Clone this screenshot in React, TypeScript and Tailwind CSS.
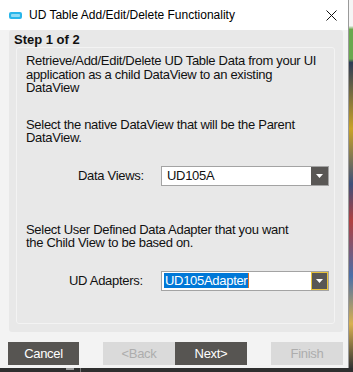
import React from "react";

const Arrow = () => (
  <svg width="7" height="4" viewBox="0 0 7 4">
    <path d="M0 0 H7 L3.5 4 Z" fill="#ffffff" />
  </svg>
);

type ComboProps = { value: string; focused?: boolean };

const Combo = ({ value, focused }: ComboProps) => (
  <div className="flex h-[20px] w-[168px] border border-[#a3a3a3] bg-white">
    <div className="flex flex-1 items-center pl-[2px]">
      {focused ? (
        <span className="flex items-center">
          <span className="bg-[#0078d7] px-[1px] leading-[15px] text-white">{value}</span>
          <span className="h-[15px] w-[1px] bg-[#e07020]" />
        </span>
      ) : (
        <span className="pl-[3px] text-[#111]">{value}</span>
      )}
    </div>
    <div
      className={
        focused
          ? "flex w-[17px] items-center justify-center border border-[#e8c23a] bg-[#595755]"
          : "flex w-[17px] items-center justify-center bg-[#595755]"
      }
    >
      <Arrow />
    </div>
  </div>
);

const WizButton = ({ label, enabled }: { label: string; enabled: boolean }) => (
  <div
    className={
      enabled
        ? "flex h-[23px] w-[72px] items-center justify-center bg-[#575552] text-white"
        : "flex h-[23px] w-[72px] items-center justify-center bg-[#dadada] text-[#adadad]"
    }
  >
    {label}
  </div>
);

export default function App() {
  return (
    <div className="flex h-[372px] w-[353px] flex-col bg-[#2f2f2f] font-['Liberation_Sans',Arial,sans-serif] text-[13px] tracking-[-0.3px]">
      <div className="flex h-[368px]">
        {/* window */}
        <div className="flex w-[349px] flex-col border-r border-[#9a9a9a] bg-[#f3f3f3]">
          {/* title bar */}
          <div className="flex h-[30px] items-center bg-white pl-[9px] pr-[11px]">
            <div className="flex h-[7px] w-[13px] items-center justify-center rounded-[2px] bg-[#29b6ea]">
              <div className="h-[3px] w-[9px] rounded-[1px] bg-[#8fdcf6]" />
            </div>
            <span className="ml-[7px] font-['Liberation_Sans',Arial,sans-serif] text-[12px] tracking-normal text-black">
              UD Table Add/Edit/Delete Functionality
            </span>
            <svg className="ml-auto" width="11" height="11" viewBox="0 0 11 11">
              <path d="M0.5 0.5 L10.5 10.5 M10.5 0.5 L0.5 10.5" stroke="#111" strokeWidth="1" />
            </svg>
          </div>

          {/* body */}
          <div className="flex flex-1 flex-col pl-[9px] pr-[5px]">
            <div className="flex h-[302px] flex-col rounded-[3px] bg-[#e8e8e8] pl-[7px] pr-[8px]">
              <div className="-ml-[2px] pt-[2px] font-bold leading-[15px] tracking-normal text-[#111]">Step 1 of 2</div>
              <div className="flex h-[277px] flex-col rounded-[3px] border border-[#f3f3f3] bg-[#e8e8e8] pl-[9px] leading-[13.5px] whitespace-nowrap text-[#111]">
                <p className="mt-[6px]">
                  Retrieve/Add/Edit/Delete UD Table Data from your UI
                  <br />
                  application as a child DataView to an existing
                  <br />
                  DataView
                </p>
                <p className="mt-[23px]">
                  Select the native DataView that will be the Parent
                  <br />
                  DataView.
                </p>
                <div className="mt-[21px] flex items-center">
                  <span className="ml-[52px] w-[83px]">Data Views:</span>
                  <Combo value="UD105A" />
                </div>
                <p className="mt-[37px]">
                  Select User Defined Data Adapter that you want
                  <br />
                  the Child View to be based on.
                </p>
                <div className="mt-[21px] flex items-center">
                  <span className="ml-[43px] w-[92px]">UD Adapters:</span>
                  <Combo value="UD105Adapter" focused />
                </div>
              </div>
            </div>
            <div className="-ml-[1px] mt-[10px] flex">
              <WizButton label="Cancel" enabled />
              <div className="ml-[24px] flex">
                <WizButton label="<Back" enabled={false} />
                <WizButton label="Next>" enabled />
              </div>
              <div className="ml-[24px]">
                <WizButton label="Finish" enabled={false} />
              </div>
            </div>
          </div>
        </div>
        {/* desktop strip */}
        <div className="w-[4px] bg-[linear-gradient(#f5f5f5_0%,#f5f5f5_7%,#6aa84f_8%,#6aa84f_16%,#2d3b55_17%,#c9a227_35%,#3d4f7a_50%,#b04040_60%,#4a6ea8_75%,#d8b050_88%,#333_100%)]" />
      </div>
      <div className="flex h-[4px]">
        <div className="ml-[66px] h-[2px] w-[8px] bg-[#9a9a9a]" />
        <div className="ml-[6px] w-[1px] bg-[#777]" />
      </div>
    </div>
  );
}
